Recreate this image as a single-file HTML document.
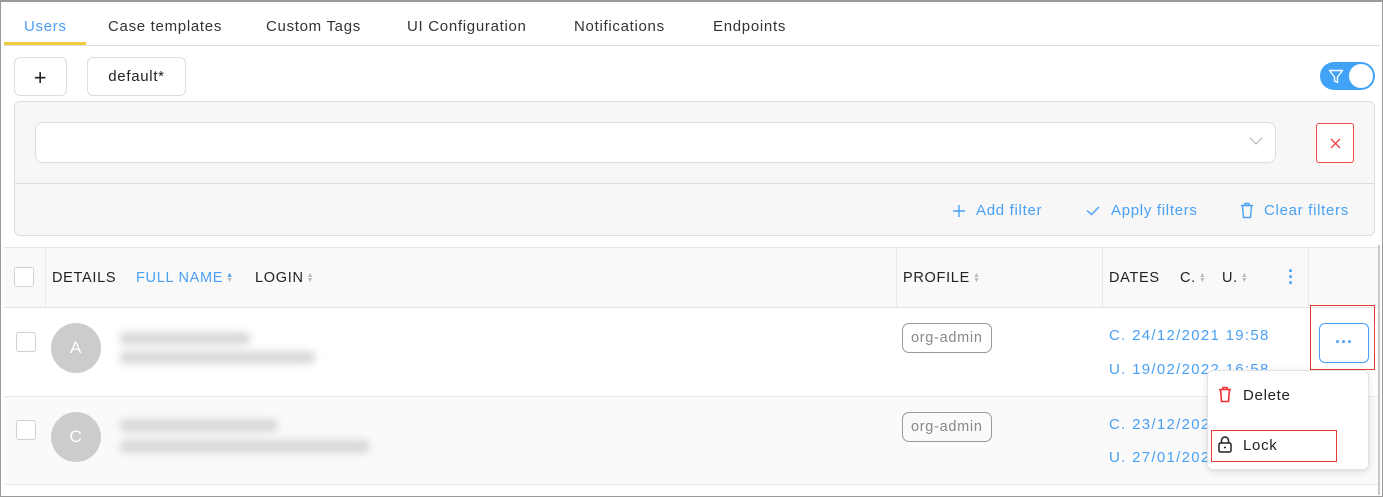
<!DOCTYPE html>
<html><head><meta charset="utf-8"><style>
*{box-sizing:border-box;margin:0;padding:0}
body{width:1383px;height:497px;background:#fff;font-family:"Liberation Sans",sans-serif;position:relative;overflow:hidden;color:#222;letter-spacing:0.7px}
.a{position:absolute}
.t{font-size:15px;top:18px;color:#333}
.hd{font-size:14.5px;top:270px;color:#222}
.blue{color:#4aa0f5}
.sort{display:inline-block;font-size:7px;line-height:5px;color:#bbb;vertical-align:middle;margin-left:3px}
.blur{background:#d8d8d8;filter:blur(4px);height:13px;border-radius:5px}
.cb{width:20px;height:20px;border:1px solid #d0d0d0;border-radius:3px;background:#fff}
.av{width:50px;height:50px;border-radius:50%;background:#ccc;color:#fff;font-size:17px;text-align:center;line-height:50px}
.tag{border:1px solid #999;border-radius:7px;color:#888;font-size:14.5px;padding:0 8px;height:30px;line-height:28px}
.dt{font-size:15px;color:#4aa0f5;letter-spacing:1.3px}
</style></head><body>
<div class="a" style="left:0;top:0;width:1383px;height:497px;border:1px solid #9a9a9a;border-top:2px solid #9a9a9a"></div>
<div class="a" style="left:1378px;top:245px;width:2px;height:250px;background:#c8c8c8"></div>
<div class="a t blue" style="left:24px">Users</div>
<div class="a t" style="left:108px">Case templates</div>
<div class="a t" style="left:266px">Custom Tags</div>
<div class="a t" style="left:407px">UI Configuration</div>
<div class="a t" style="left:574px">Notifications</div>
<div class="a t" style="left:713px">Endpoints</div>
<div class="a" style="left:4px;top:45px;width:1376px;height:1px;background:#ddd"></div>
<div class="a" style="left:4px;top:42px;width:82px;height:3px;background:#eccb3c"></div>
<div class="a" style="left:14px;top:57px;width:53px;height:39px;border:1px solid #ddd;border-radius:6px;text-align:center;line-height:39px;font-size:22px">+</div>
<div class="a" style="left:87px;top:57px;width:99px;height:39px;border:1px solid #ddd;border-radius:6px;text-align:center;line-height:37px;font-size:15px">default*</div>
<div class="a" style="left:1320px;top:62px;width:55px;height:28px;border-radius:14px;background:#40a3f7">
<svg class="a" style="left:8px;top:7px" width="16" height="15" viewBox="0 0 16 15"><path d="M1.5 1.5h13L9.5 8v5.5l-3-1.5V8z" fill="none" stroke="#fff" stroke-width="1.4" stroke-linejoin="round"/></svg>
<div class="a" style="left:29px;top:2px;width:24px;height:24px;border-radius:50%;background:#fff"></div></div>
<div class="a" style="left:14px;top:101px;width:1361px;height:135px;background:#f7f7f7;border:1px solid #ddd;border-radius:6px"></div>
<div class="a" style="left:15px;top:183px;width:1359px;height:1px;background:#ddd"></div>
<div class="a" style="left:35px;top:122px;width:1241px;height:41px;background:#fff;border:1px solid #ddd;border-radius:8px">
<svg class="a" style="left:1213px;top:14px" width="14" height="9"><path d="M1 1l6 6 6-6" fill="none" stroke="#bbb" stroke-width="1.3"/></svg></div>
<div class="a" style="left:1316px;top:123px;width:38px;height:40px;background:#fff;border:1px solid #f04848;border-radius:3px">
<svg class="a" style="left:13px;top:14px" width="11" height="11"><path d="M1 1l9 9M10 1l-9 9" stroke="#f04848" stroke-width="1.4"/></svg></div>
<svg class="a" style="left:952px;top:204px" width="14" height="14"><path d="M7 1v12M1 7h12" stroke="#4aa0f5" stroke-width="1.4"/></svg>
<div class="a blue" style="left:976px;top:202px;font-size:15px">Add filter</div>
<svg class="a" style="left:1086px;top:206px" width="14" height="10"><path d="M1 4.5l4.5 4L13 1" fill="none" stroke="#4aa0f5" stroke-width="1.4"/></svg>
<div class="a blue" style="left:1111px;top:202px;font-size:15px">Apply filters</div>
<svg class="a" style="left:1240px;top:202px" width="14" height="17"><path d="M1 3.5h12M5 3.5V1.5h4v2M2.5 3.5l1 12h7l1-12" fill="none" stroke="#4aa0f5" stroke-width="1.4"/></svg>
<div class="a blue" style="left:1264px;top:202px;font-size:15px">Clear filters</div>
<div class="a" style="left:4px;top:247px;width:1374px;height:61px;background:#f9f9f9;border-top:1px solid #e5e5e5;border-bottom:1px solid #e5e5e5"></div>
<div class="a" style="left:45px;top:248px;width:1px;height:59px;background:#e8e8e8"></div>
<div class="a" style="left:896px;top:248px;width:1px;height:59px;background:#e8e8e8"></div>
<div class="a" style="left:1102px;top:248px;width:1px;height:59px;background:#e8e8e8"></div>
<div class="a" style="left:1308px;top:248px;width:1px;height:59px;background:#e8e8e8"></div>
<div class="a cb" style="left:14px;top:267px"></div>
<div class="a hd" style="left:52px">DETAILS</div>
<div class="a hd blue" style="left:136px">FULL NAME<span class="sort"><span style="color:#4aa0f5">▲</span><br>▼</span></div>
<div class="a hd" style="left:255px">LOGIN<span class="sort">▲<br>▼</span></div>
<div class="a hd" style="left:903px">PROFILE<span class="sort">▲<br>▼</span></div>
<div class="a hd" style="left:1109px">DATES</div>
<div class="a hd" style="left:1180px">C.<span class="sort">▲<br>▼</span></div>
<div class="a hd" style="left:1222px">U.<span class="sort">▲<br>▼</span></div>
<div class="a blue" style="left:1288px;top:268px;font-size:18px;line-height:6px;font-weight:bold">·<br>·<br>·</div>
<div class="a" style="left:4px;top:396px;width:1374px;height:89px;background:#fafafa;border-top:1px solid #e8e8e8;border-bottom:1px solid #e8e8e8"></div>
<div class="a cb" style="left:16px;top:332px"></div>
<div class="a av" style="left:51px;top:323px">A</div>
<div class="a blur" style="left:120px;top:332px;width:130px"></div>
<div class="a blur" style="left:120px;top:351px;width:195px"></div>
<div class="a tag" style="left:902px;top:323px">org-admin</div>
<div class="a dt" style="left:1109px;top:327px">C. 24/12/2021 19:58</div>
<div class="a dt" style="left:1109px;top:361px">U. 19/02/2022 16:58</div>
<div class="a cb" style="left:16px;top:420px"></div>
<div class="a av" style="left:51px;top:412px">C</div>
<div class="a blur" style="left:120px;top:419px;width:158px"></div>
<div class="a blur" style="left:120px;top:440px;width:250px"></div>
<div class="a tag" style="left:902px;top:412px">org-admin</div>
<div class="a dt" style="left:1109px;top:416px">C. 23/12/2021</div>
<div class="a dt" style="left:1109px;top:449px">U. 27/01/2022</div>
<div class="a" style="left:1310px;top:305px;width:65px;height:65px;border:1px solid #e63a3a"></div>
<div class="a" style="left:1319px;top:323px;width:50px;height:40px;border:1px solid #4aa0f5;border-radius:6px;background:#fff;text-align:center;line-height:36px;color:#4aa0f5;font-size:18px;font-weight:bold;letter-spacing:0">···</div>
<div class="a" style="left:1207px;top:370px;width:162px;height:100px;background:#fff;border:1px solid #e2e2e2;border-radius:6px;box-shadow:0 2px 8px rgba(0,0,0,.12)"></div>
<svg class="a" style="left:1218px;top:386px" width="14" height="17"><path d="M1 3.5h12M5 3.5V1.5h4v2M2.5 3.5l1 12h7l1-12z" fill="none" stroke="#f03030" stroke-width="1.6"/></svg>
<div class="a" style="left:1243px;top:387px;font-size:15px">Delete</div>
<div class="a" style="left:1211px;top:430px;width:126px;height:32px;border:1px solid #e63a3a"></div>
<svg class="a" style="left:1217px;top:436px" width="16" height="17"><rect x="2" y="7" width="12" height="9" rx="1.5" fill="none" stroke="#222" stroke-width="1.5"/><path d="M4.5 7V4.5a3.5 3.5 0 0 1 7 0V7" fill="none" stroke="#222" stroke-width="1.5"/><circle cx="8" cy="11.5" r="1" fill="#222"/></svg>
<div class="a" style="left:1243px;top:437px;font-size:15px">Lock</div>
</body></html>
